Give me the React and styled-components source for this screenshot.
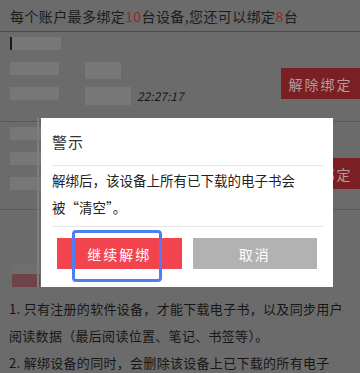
import React from 'react'
import styled, { createGlobalStyle } from 'styled-components'

// page behind the dialog, already dimmed by the mask
const Global = createGlobalStyle`
  html, body { margin: 0; padding: 0; }
  body {
    font-family: "Noto Sans CJK SC", "Noto Sans", sans-serif;
    background: #6b6b6b;
  }
`

const Page = styled.div`
  position: relative;
  width: 360px;
  height: 373px;
  overflow: hidden;
  background: #6b6b6b;
`

const Header = styled.div`
  height: 31px;
  padding-left: 10px;
  display: flex;
  align-items: center;
  font-size: 14px;
  color: #1c1c1c;
  border-bottom: 1px solid #4a4a4a;
  letter-spacing: 0.4px;
`

const Red = styled.span`
  color: #9a2626;
`

const Record = styled.div`
  height: ${p => p.h}px;
  display: flex;
  justify-content: space-between;
  border-bottom: 1px solid #5a5a5a;
  box-sizing: border-box;
`

const Info = styled.div`
  padding: 5px 0 0 10px;
  display: flex;
  flex-direction: column;
  gap: 12px;
`

const InfoRow = styled.div`
  display: flex;
  align-items: flex-start;
  gap: 26px;
  height: 13px;
`

const Blur = styled.div`
  width: ${p => p.w}px;
  height: ${p => p.h || 13}px;
  background: #777;
  border-left: ${p => (p.mark ? '2px solid #1a1a1a' : 'none')};
`

const Time = styled.span`
  font-size: 12px;
  color: #1a1a1a;
  margin-left: -20px;
  font-style: italic;
  line-height: 18px;
`

const UnbindButton = styled.div`
  margin-top: ${p => p.top}px;
  width: 79px;
  height: 31px;
  background: #7a1f24;
  color: #b89a9c;
  font-size: 14px;
  letter-spacing: 2px;
  display: flex;
  align-items: center;
  justify-content: center;
`

const Notes = styled.div`
  padding: 0 0 0 9px;
`

const NoteTitle = styled.div`
  width: 28px;
  height: 13px;
  margin: 64px 0 8px 3px;
  background: #6e4448;
  box-shadow: 0 -10px 0 #6f6f6f;
`

const NoteLine = styled.div`
  font-size: 13px;
  line-height: 27px;
  color: #161616;
  letter-spacing: 0.3px;
  white-space: nowrap;
`

const Modal = styled.div`
  position: absolute;
  left: 41px;
  top: 118px;
  width: 292px;
  height: 169px;
  background: #fff;
  display: flex;
  flex-direction: column;

  &::before {
    content: '';
    position: absolute;
    left: -4px;
    top: 0;
    bottom: 0;
    width: 2px;
    background: #7d7d7d;
  }
`

const ModalTitle = styled.div`
  height: 47px;
  margin: 0 10px 0 11px;
  display: flex;
  align-items: center;
  font-size: 15px;
  color: #333;
  border-bottom: 1px solid #e6e6e6;
  letter-spacing: 1px;
`

const ModalBody = styled.div`
  height: 61px;
  margin: 0 10px 0 11px;
  padding-top: 1px;
  box-sizing: border-box;
  font-size: 13.5px;
  line-height: 27px;
  color: #222;
  border-bottom: 1px solid #e6e6e6;
`

const Actions = styled.div`
  display: flex;
  gap: 11px;
  padding: 11px 16px 0;
`

const ActionButton = styled.div`
  flex: 1;
  height: 31px;
  background: ${p => (p.primary ? '#f2444f' : '#b2b2b2')};
  color: #fff;
  font-size: 14px;
  letter-spacing: 2px;
  display: flex;
  align-items: center;
  justify-content: center;
`

const Highlight = styled.div`
  position: absolute;
  left: 72px;
  top: 230px;
  width: 90px;
  height: 52px;
  box-sizing: border-box;
  border: 3px solid #4d7ff2;
  border-radius: 4px;
`

export default function App() {
  return (
    <Page>
      <Global />
      <Header>
        每个账户最多绑定<Red>10</Red>台设备,您还可以绑定<Red>8</Red>台
      </Header>
      <Record h={90}>
        <Info>
          <InfoRow><Blur w={49} mark /></InfoRow>
          <InfoRow><Blur w={49} /><Blur w={36} h={17} /></InfoRow>
          <InfoRow><Blur w={49} /><Blur w={46} h={18} /><Time>22:27:17</Time></InfoRow>
        </Info>
        <UnbindButton top={36}>解除绑定</UnbindButton>
      </Record>
      <Record h={88}>
        <Info>
          <InfoRow><Blur w={49} /></InfoRow>
          <InfoRow><Blur w={49} /><Blur w={36} /></InfoRow>
          <InfoRow><Blur w={49} /><Blur w={46} /></InfoRow>
        </Info>
        <UnbindButton top={36}>解除绑定</UnbindButton>
      </Record>
      <Notes>
        <NoteTitle />
        <NoteLine>1. 只有注册的软件设备，才能下载电子书，以及同步用户</NoteLine>
        <NoteLine>阅读数据（最后阅读位置、笔记、书签等）。</NoteLine>
        <NoteLine>2. 解绑设备的同时，会删除该设备上已下载的所有电子</NoteLine>
      </Notes>
      <Modal>
        <ModalTitle>警示</ModalTitle>
        <ModalBody>
          解绑后，该设备上所有已下载的电子书会
          <br />
          被“清空”。
        </ModalBody>
        <Actions>
          <ActionButton primary>继续解绑</ActionButton>
          <ActionButton>取消</ActionButton>
        </Actions>
      </Modal>
      <Highlight />
    </Page>
  )
}
